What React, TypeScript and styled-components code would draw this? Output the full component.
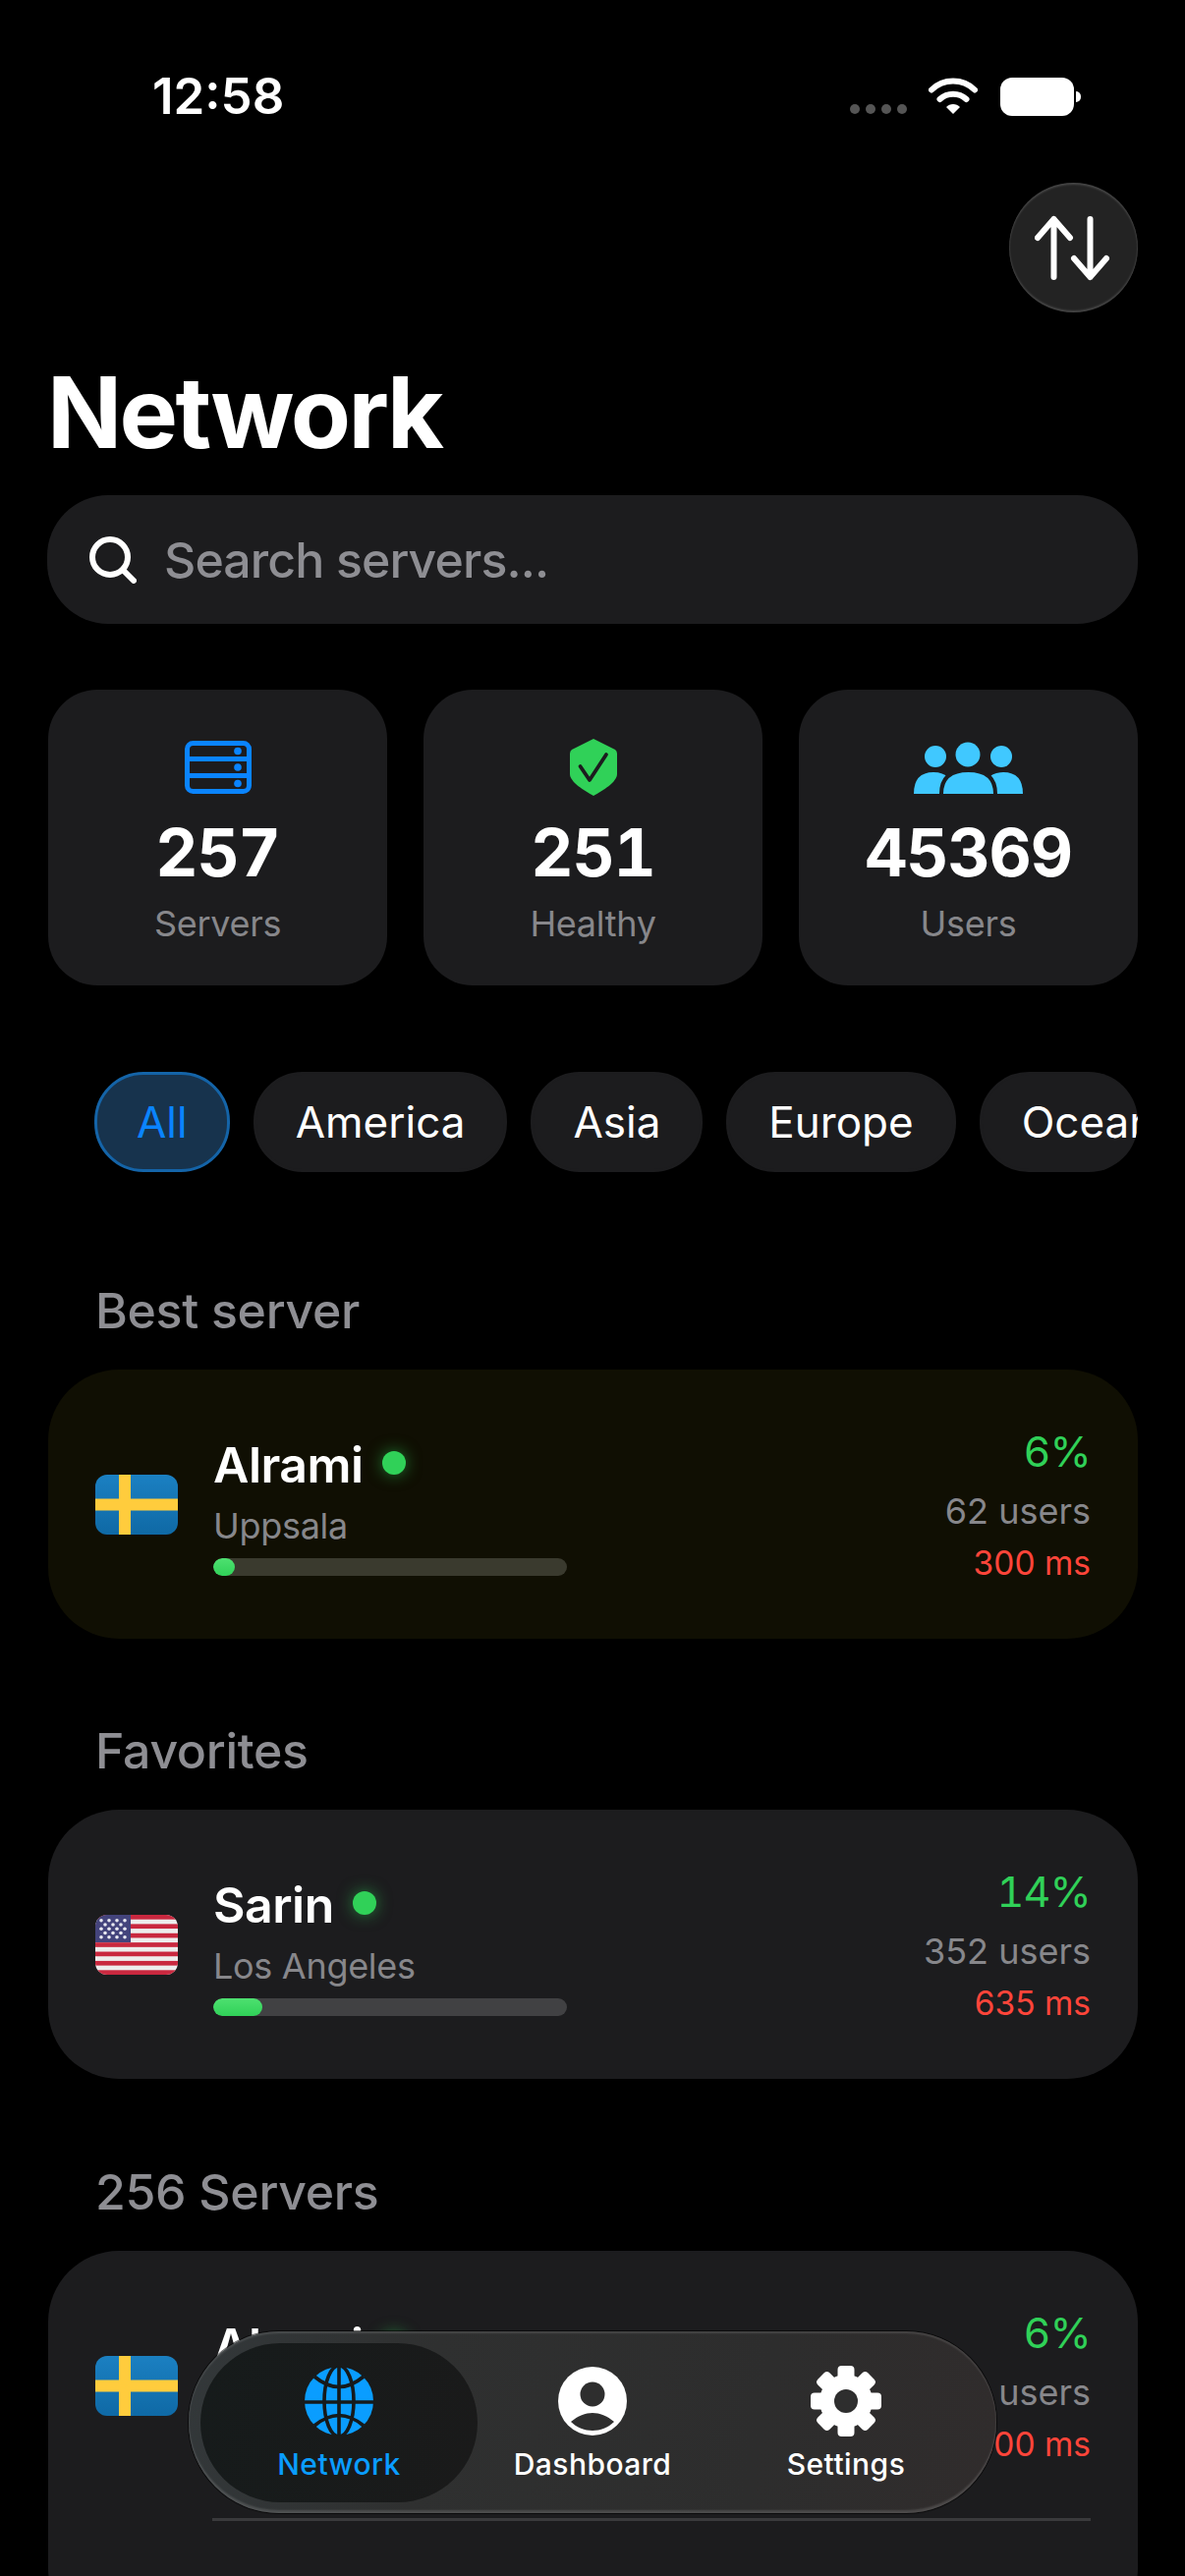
import React from 'react';
import styled, { createGlobalStyle } from 'styled-components';

const GlobalStyle = createGlobalStyle`
  html, body {
    margin: 0;
    height: 2622px;
    overflow: hidden;
    background: #000;
    font-family: 'Inter', 'Liberation Sans', sans-serif;
    color: #fff;
  }
`;

const Page = styled.div`
  position: relative;
  width: 1206px;
  height: 2622px;
  overflow: hidden;
  background: #000;
`;

const StatusBar = styled.div`
  display: flex;
  align-items: flex-start;
  justify-content: space-between;
  height: 186px;
  box-sizing: border-box;
  padding: 68px 113px 0 155px;
`;

const Clock = styled.div`
  font-size: 51px;
  line-height: 60px;
  font-weight: 600;
`;

const StatusIcons = styled.div`
  display: flex;
  align-items: flex-start;
  padding-top: 11px;
`;

const SignalDots = styled.div`
  display: flex;
  gap: 6px;
  margin: 27px 22px 0 0;
`;

const SignalDot = styled.span`
  width: 10px;
  height: 10px;
  border-radius: 50%;
  background: #555;
`;

const Battery = styled.div`
  position: relative;
  width: 75px;
  height: 39px;
  margin-left: 23px;
  border-radius: 12px;
  background: #fff;

  &::after {
    content: '';
    position: absolute;
    right: -7px;
    top: 14px;
    width: 5px;
    height: 11px;
    border-radius: 0 5px 5px 0;
    background: #fff;
  }
`;

const ActionRow = styled.div`
  display: flex;
  justify-content: flex-end;
  padding-right: 48px;
`;

const SortButton = styled.button`
  display: flex;
  align-items: center;
  justify-content: center;
  width: 131px;
  height: 132px;
  padding: 0;
  border: 0;
  border-radius: 50%;
  background: #232323;
  box-shadow: inset 0 2px 2px rgba(255, 255, 255, 0.16), inset 0 -2px 2px rgba(255, 255, 255, 0.16);
`;

const Title = styled.h1`
  margin: 42px 0 24px 48px;
  font-size: 100px;
  line-height: 120px;
  font-weight: 700;
  letter-spacing: -2.6px;
`;

const SearchBar = styled.div`
  display: flex;
  align-items: center;
  gap: 28px;
  height: 131px;
  margin: 0 48px;
  padding-left: 43px;
  box-sizing: border-box;
  border-radius: 62px;
  background: #1c1c1e;
`;

const SearchInput = styled.input`
  flex: 1;
  border: 0;
  outline: 0;
  padding: 0;
  background: transparent;
  font-family: inherit;
  font-size: 50px;
  font-weight: 500;
  letter-spacing: -0.9px;
  color: #fff;

  &::placeholder {
    color: #8e8e93;
    opacity: 1;
  }
`;

const Stats = styled.div`
  display: grid;
  grid-template-columns: repeat(3, 1fr);
  gap: 37px;
  margin: 67px 48px 0 49px;
`;

const StatCard = styled.div`
  display: flex;
  flex-direction: column;
  align-items: center;
  height: 301px;
  box-sizing: border-box;
  padding-top: 50px;
  border-radius: 50px;
  background: #1c1c1e;
`;

const StatIcon = styled.div`
  display: flex;
  align-items: center;
  justify-content: center;
  height: 58px;
`;

const StatValue = styled.div`
  margin-top: 18px;
  font-size: 67px;
  line-height: 80px;
  font-weight: 700;
  font-variant-numeric: tabular-nums;
  letter-spacing: -1.2px;
`;

const StatLabel = styled.div`
  margin-top: 10px;
  font-size: 36px;
  line-height: 44px;
  letter-spacing: -0.3px;
  color: #87878b;
`;

const ChipScroller = styled.div`
  display: flex;
  gap: 24px;
  margin: 88px 48px 0;
  padding-left: 48px;
  overflow: hidden;
  border-radius: 50px;
`;

const Chip = styled.div<{ $active?: boolean }>`
  flex-shrink: 0;
  display: flex;
  align-items: center;
  height: 102px;
  box-sizing: border-box;
  padding: 0 40px;
  border-radius: 50px;
  font-size: 44px;
  font-weight: 400;
  background: ${({ $active }) => ($active ? '#17334d' : '#1c1c1e')};
  color: ${({ $active }) => ($active ? '#0a84ff' : '#fff')};
  border: 3px solid ${({ $active }) => ($active ? '#1464a8' : '#1c1c1e')};
`;

const SectionTitle = styled.h2<{ $top: number }>`
  margin: ${({ $top }) => $top}px 0 30px 97px;
  font-size: 50px;
  line-height: 60px;
  font-weight: 500;
  letter-spacing: -0.3px;
  color: #8e8e93;
`;

const ServerCard = styled.div<{ $best?: boolean }>`
  margin: 0 48px 0 49px;
  border-radius: 72px;
  background: ${({ $best }) => ($best ? '#100f03' : '#1c1c1e')};
`;

const ListCard = styled(ServerCard)`
  padding-bottom: 120px;
`;

const Row = styled.div`
  display: flex;
  align-items: center;
  height: 274px;
  box-sizing: border-box;
  padding: 0 48px 0 48px;
`;

const Flag = styled.div`
  width: 84px;
  height: 61px;
  border-radius: 12px;
  overflow: hidden;
  flex-shrink: 0;

  svg {
    display: block;
  }
`;

const ServerInfo = styled.div`
  width: 360px;
  margin: 2px 0 0 36px;
`;

const NameRow = styled.div`
  display: flex;
  align-items: center;
  gap: 19px;
`;

const ServerName = styled.div`
  font-size: 50px;
  line-height: 60px;
  font-weight: 600;
  letter-spacing: -0.5px;
`;

const StatusDot = styled.span`
  width: 24px;
  height: 24px;
  margin-top: -4px;
  border-radius: 50%;
  background: #30d158;
  box-shadow: 0 0 16px rgba(48, 209, 88, 0.55);
`;

const City = styled.div`
  margin-top: 10px;
  font-size: 36px;
  line-height: 44px;
  letter-spacing: -0.3px;
  color: #87878b;
`;

const LoadTrack = styled.div<{ $best?: boolean }>`
  height: 18px;
  margin-top: 11px;
  border-radius: 9px;
  overflow: hidden;
  background: ${({ $best }) => ($best ? '#3a3a2e' : '#414143')};
`;

const LoadFill = styled.div`
  height: 100%;
  border-radius: 9px;
  background: linear-gradient(#4ee070, #30d158);
`;

const Metrics = styled.div`
  margin-left: auto;
  text-align: right;
`;

const Percent = styled.div`
  font-size: 43px;
  line-height: 52px;
  font-variant-numeric: tabular-nums;
  letter-spacing: -0.8px;
  color: #30d158;
`;

const Users = styled.div`
  margin-top: 13px;
  font-size: 36px;
  line-height: 44px;
  color: #87878b;
`;

const Latency = styled.div`
  margin-top: 10px;
  font-size: 33.5px;
  line-height: 42px;
  color: #ff453a;
`;

const RowDivider = styled.div`
  height: 3px;
  margin: -2px 48px 0 167px;
  background: #3a3a3c;
`;

const TabBar = styled.nav`
  position: absolute;
  left: 192px;
  top: 2373px;
  display: grid;
  grid-template-columns: 282px 234px 282px;
  width: 822px;
  height: 185px;
  box-sizing: border-box;
  padding: 12px 12px 11px;
  border-radius: 92px;
  background: linear-gradient(100deg, #33383a 0%, #2f3030 30%, #2d2d2d 70%, #302c2c 100%);
  box-shadow: 0 0 0 1px rgba(0, 0, 0, 0.6), inset 0 2px 2px rgba(255, 255, 255, 0.12),
    inset 0 -3px 2px rgba(255, 255, 255, 0.14);
`;

const Tab = styled.div<{ $active?: boolean }>`
  display: flex;
  flex-direction: column;
  align-items: center;
  padding-top: 23px;
  border-radius: 81px;
  background: ${({ $active }) => ($active ? 'linear-gradient(100deg, #161b1b, #1a1a1a)' : 'transparent')};
`;

const TabIcon = styled.div`
  display: flex;
  align-items: center;
  justify-content: center;
  height: 72px;
`;

const TabLabel = styled.div<{ $active?: boolean }>`
  margin-top: 10px;
  font-size: 30px;
  line-height: 36px;
  font-weight: 500;
  letter-spacing: 0.45px;
  color: ${({ $active }) => ($active ? '#0a9dff' : '#fff')};
`;

const ArrowsIcon = () => (
  <svg width="80" height="70" viewBox="0 0 80 70" fill="none" stroke="#fff" strokeWidth="6" strokeLinecap="round" strokeLinejoin="round">
    <path d="M19.5 65V6M3 25 19.5 6 36 25" />
    <path d="M56.5 6V65M40 46 56.5 65 73 46" />
  </svg>
);

const WifiIcon = () => (
  <svg width="50" height="37" viewBox="0 0 50 37" fill="none">
    <path d="M3 12.5C15 0.5 35 0.5 47 12.5" stroke="#fff" strokeWidth="6" strokeLinecap="round" />
    <path d="M11.5 22C19 15 31 15 38.5 22" stroke="#fff" strokeWidth="6" strokeLinecap="round" />
    <path d="M18 30C21.5 26 28.5 26 32 30L25 37Z" fill="#fff" />
  </svg>
);

const SearchIcon = () => (
  <svg width="48" height="48" viewBox="0 0 48 48" fill="none" stroke="#fff" strokeWidth="6" strokeLinecap="round">
    <circle cx="21" cy="21" r="18" />
    <path d="M35 35 45 45" />
  </svg>
);

const ServersIcon = () => (
  <svg width="68" height="54" viewBox="0 0 68 54" fill="none">
    <rect x="2.5" y="2.5" width="63" height="49" rx="6" stroke="#0a84ff" strokeWidth="5" />
    <path d="M2 18.5H66M2 35.5H66" stroke="#0a84ff" strokeWidth="5" />
    <circle cx="54" cy="10.5" r="3.8" fill="#0a84ff" />
    <circle cx="54" cy="27" r="3.8" fill="#0a84ff" />
    <circle cx="54" cy="43.5" r="3.8" fill="#0a84ff" />
  </svg>
);

const ShieldIcon = () => (
  <svg width="48" height="58" viewBox="0 0 48 58">
    <path d="M24 0 46 11Q48 12.5 48 15V36C48 44 33 53 24 58 15 53 0 44 0 36V15Q0 12.5 2 11Z" fill="#30d158" />
    <path d="M10.5 28 20 42 37 16" fill="none" stroke="#1c1c1e" strokeWidth="3.8" strokeLinecap="round" strokeLinejoin="round" />
  </svg>
);

const UsersIcon = () => (
  <svg width="111" height="53" viewBox="0 0 111 53" fill="#40c8ff">
    <circle cx="22" cy="15" r="11" />
    <circle cx="55" cy="13" r="12.5" />
    <circle cx="89" cy="15" r="11" />
    <path d="M0 53Q0 31 20 31 40 31 40 53Z" />
    <path d="M71 53Q71 31 91 31 111 31 111 53Z" />
    <path d="M28 62V53Q28 29 55.5 29 83 29 83 53V62Z" stroke="#1c1c1e" strokeWidth="4" />
  </svg>
);

const SwedenFlag = () => (
  <svg width="84" height="61" viewBox="0 0 84 61">
    <defs>
      <linearGradient id="seBlue" x1="0" y1="0" x2="0" y2="1">
        <stop offset="0" stopColor="#1b80c2" />
        <stop offset="1" stopColor="#0f69a5" />
      </linearGradient>
    </defs>
    <rect width="84" height="61" fill="url(#seBlue)" />
    <path d="M24 0H36V24.5H84V36.5H36V61H24V36.5H0V24.5H24Z" fill="#ffcc3d" />
  </svg>
);

const StarGrid = () => {
  const rows = [5.7, 10, 14.3, 18.5, 22.7];
  return (
    <>
      {rows.map((y, i) =>
        (i % 2 === 0 ? [6, 14, 22, 30] : [10, 18, 26]).map(x => (
          <circle key={`${x}-${y}`} cx={x} cy={y} r="1.8" fill="#e8e8f0" />
        ))
      )}
    </>
  );
};

const UsaFlag = () => {
  const stripe = 61 / 13;
  return (
    <svg width="84" height="61" viewBox="0 0 84 61">
      <rect width="84" height="61" fill="#ededed" />
      {Array.from({ length: 7 }, (_, i) => (
        <rect key={i} y={i * 2 * stripe} width="84" height={stripe} fill="#c9283f" />
      ))}
      <rect width="36" height="28" fill="#44447c" />
      <StarGrid />
    </svg>
  );
};

const GlobeIcon = () => (
  <svg width="70" height="70" viewBox="0 0 70 70" fill="none">
    <circle cx="35" cy="35" r="35" fill="#0a9dff" />
    <g stroke="#161a1b" strokeWidth="3.6">
      <path d="M35 0V70M0 36H70" />
      <ellipse cx="35" cy="35" rx="15" ry="36" />
      <path d="M10 10Q35 31 60 10M10 60Q35 39 60 60" />
    </g>
  </svg>
);

const PersonIcon = () => (
  <svg width="70" height="70" viewBox="0 0 70 70">
    <circle cx="35" cy="35" r="35" fill="#fff" />
    <circle cx="35" cy="28" r="12.5" fill="#2e2e2e" />
    <path d="M13 56C20 50 28 47 35 47 42 47 50 50 57 56 51 62 43 65 35 65 27 65 19 62 13 56Z" fill="#2e2e2e" />
  </svg>
);

const GearIcon = () => (
  <svg width="72" height="72" viewBox="0 0 72 72">
    <circle cx="36" cy="36" r="27" fill="#fff" />
    {[0, 45, 90, 135, 180, 225, 270, 315].map(angle => (
      <rect key={angle} x="27.5" y="0" width="17" height="20" rx="4" fill="#fff" transform={`rotate(${angle} 36 36)`} />
    ))}
    <circle cx="36" cy="36" r="12" fill="#2e2e2e" />
  </svg>
);

type Server = {
  name: string;
  city: string;
  flag: 'se' | 'us';
  load: number;
  users: number;
  latency: number;
};

const alrami: Server = { name: 'Alrami', city: 'Uppsala', flag: 'se', load: 6, users: 62, latency: 300 };
const sarin: Server = { name: 'Sarin', city: 'Los Angeles', flag: 'us', load: 14, users: 352, latency: 635 };

const ServerRow = ({ server, best }: { server: Server; best?: boolean }) => (
  <Row>
    <Flag>{server.flag === 'se' ? <SwedenFlag /> : <UsaFlag />}</Flag>
    <ServerInfo>
      <NameRow>
        <ServerName>{server.name}</ServerName>
        <StatusDot />
      </NameRow>
      <City>{server.city}</City>
      <LoadTrack $best={best}>
        <LoadFill style={{ width: `${server.load}%` }} />
      </LoadTrack>
    </ServerInfo>
    <Metrics>
      <Percent>{server.load}%</Percent>
      <Users>{server.users} users</Users>
      <Latency>{server.latency} ms</Latency>
    </Metrics>
  </Row>
);

const regions = ['All', 'America', 'Asia', 'Europe', 'Oceania'];

export default function App() {
  return (
    <Page>
      <GlobalStyle />
      <StatusBar>
        <Clock>12:58</Clock>
        <StatusIcons>
          <SignalDots>
            <SignalDot />
            <SignalDot />
            <SignalDot />
            <SignalDot />
          </SignalDots>
          <WifiIcon />
          <Battery />
        </StatusIcons>
      </StatusBar>

      <ActionRow>
        <SortButton>
          <ArrowsIcon />
        </SortButton>
      </ActionRow>

      <Title>Network</Title>

      <SearchBar>
        <SearchIcon />
        <SearchInput placeholder="Search servers..." readOnly />
      </SearchBar>

      <Stats>
        <StatCard>
          <StatIcon><ServersIcon /></StatIcon>
          <StatValue>257</StatValue>
          <StatLabel>Servers</StatLabel>
        </StatCard>
        <StatCard>
          <StatIcon><ShieldIcon /></StatIcon>
          <StatValue>251</StatValue>
          <StatLabel>Healthy</StatLabel>
        </StatCard>
        <StatCard>
          <StatIcon><UsersIcon /></StatIcon>
          <StatValue>45369</StatValue>
          <StatLabel>Users</StatLabel>
        </StatCard>
      </Stats>

      <ChipScroller>
        {regions.map((region, i) => (
          <Chip key={region} $active={i === 0}>{region}</Chip>
        ))}
      </ChipScroller>

      <SectionTitle $top={111}>Best server</SectionTitle>
      <ServerCard $best>
        <ServerRow server={alrami} best />
      </ServerCard>

      <SectionTitle $top={84}>Favorites</SectionTitle>
      <ServerCard>
        <ServerRow server={sarin} />
      </ServerCard>

      <SectionTitle $top={85}>256 Servers</SectionTitle>
      <ListCard>
        <ServerRow server={alrami} />
        <RowDivider />
      </ListCard>

      <TabBar>
        <Tab $active>
          <TabIcon><GlobeIcon /></TabIcon>
          <TabLabel $active>Network</TabLabel>
        </Tab>
        <Tab>
          <TabIcon><PersonIcon /></TabIcon>
          <TabLabel>Dashboard</TabLabel>
        </Tab>
        <Tab>
          <TabIcon><GearIcon /></TabIcon>
          <TabLabel>Settings</TabLabel>
        </Tab>
      </TabBar>
    </Page>
  );
}
